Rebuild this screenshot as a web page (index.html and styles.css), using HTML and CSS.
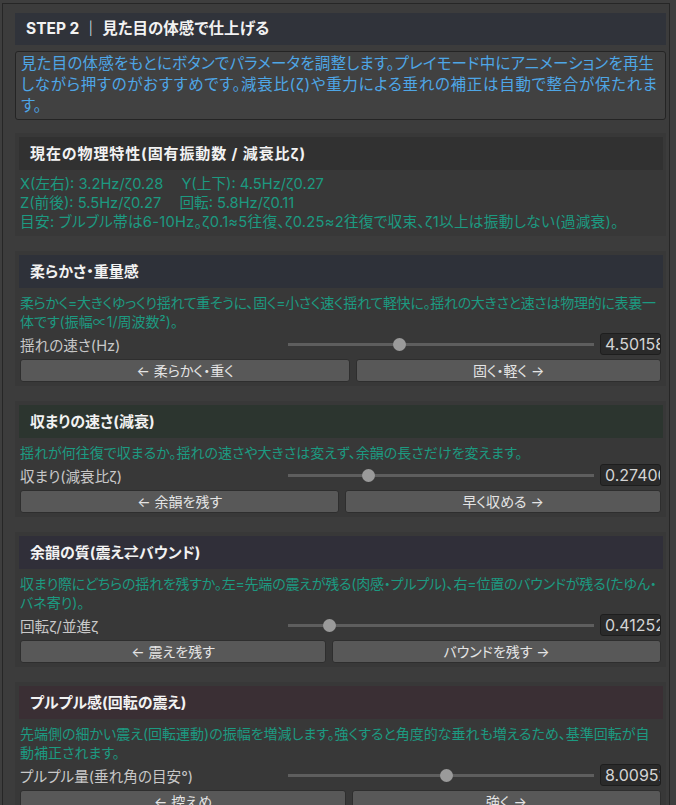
FILE: index.html
```html
<!DOCTYPE html>
<html lang="ja">
<head>
<meta charset="utf-8">
<title>STEP 2</title>
<link rel="stylesheet" href="styles.css">
</head>
<body>
<div class="panel">
  <div class="step-head">STEP 2 ｜ 見た目の体感で仕上げる</div>
  <div class="help">
    <div class="ln first">見た目の体感をもとにボタンでパラメータを調整します。プレイモード中にアニメーションを再生</div>
    <div class="ln wide">しながら押すのがおすすめです。減衰比(ζ)や重力による垂れの補正は自動で整合が保たれま</div>
    <div class="ln">す。</div>
  </div>

  <section class="sec">
    <div class="sec-head tone-neutral spread">現在の物理特性(固有振動数 / 減衰比ζ)</div>
    <div class="desc stats">
      <div class="ln">X(左右): 3.2Hz/ζ0.28<span class="col2">Y(上下): 4.5Hz/ζ0.27</span></div>
      <div class="ln">Z(前後): 5.5Hz/ζ0.27<span class="col2">回転: 5.8Hz/ζ0.11</span></div>
      <div class="ln wide">目安: ブルブル帯は6-10Hz。ζ0.1≈5往復、ζ0.25≈2往復で収束、ζ1以上は振動しない(過減衰)。</div>
    </div>
  </section>

  <section class="sec">
    <div class="sec-head tone-blue">柔らかさ・重量感</div>
    <div class="desc">
      <div class="ln tight">柔らかく=大きくゆっくり揺れて重そうに、固く=小さく速く揺れて軽快に。揺れの大きさと速さは物理的に表裏一</div>
      <div class="ln">体です(振幅∝1/周波数²)。</div>
    </div>
    <div class="row">
      <div class="label">揺れの速さ(Hz)</div>
      <div class="slider"><div class="thumb" style="left: 36.3%"></div></div>
      <div class="field">4.50158</div>
    </div>
    <div class="btns">
      <div class="btn">← 柔らかく・重く</div>
      <div class="btn">固く・軽く →</div>
    </div>
  </section>

  <section class="sec">
    <div class="sec-head tone-green">収まりの速さ(減衰)</div>
    <div class="desc">
      <div class="ln">揺れが何往復で収まるか。揺れの速さや大きさは変えず、余韻の長さだけを変えます。</div>
    </div>
    <div class="row">
      <div class="label">収まり(減衰比ζ)</div>
      <div class="slider"><div class="thumb" style="left: 26.1%"></div></div>
      <div class="field">0.27400</div>
    </div>
    <div class="btns">
      <div class="btn">← 余韻を残す</div>
      <div class="btn">早く収める →</div>
    </div>
  </section>

  <section class="sec">
    <div class="sec-head tone-purple">余韻の質(震え⇄バウンド)</div>
    <div class="desc">
      <div class="ln tight2">収まり際にどちらの揺れを残すか。左=先端の震えが残る(肉感・プルプル)、右=位置のバウンドが残る(たゆん・</div>
      <div class="ln">バネ寄り)。</div>
    </div>
    <div class="row">
      <div class="label">回転ζ/並進ζ</div>
      <div class="slider"><div class="thumb" style="left: 13.4%"></div></div>
      <div class="field">0.41252</div>
    </div>
    <div class="btns">
      <div class="btn">← 震えを残す</div>
      <div class="btn">バウンドを残す →</div>
    </div>
  </section>

  <section class="sec">
    <div class="sec-head tone-red">プルプル感(回転の震え)</div>
    <div class="desc">
      <div class="ln">先端側の細かい震え(回転運動)の振幅を増減します。強くすると角度的な垂れも増えるため、基準回転が自</div>
      <div class="ln">動補正されます。</div>
    </div>
    <div class="row">
      <div class="label">プルプル量(垂れ角の目安°)</div>
      <div class="slider"><div class="thumb" style="left: 51.6%"></div></div>
      <div class="field">8.00952</div>
    </div>
    <div class="btns">
      <div class="btn">← 控えめ</div>
      <div class="btn">強く →</div>
    </div>
  </section>
</div>
</body>
</html>
```

FILE: styles.css
```css
html, body {
  margin: 0;
  padding: 0;
  overflow: hidden;
  background: #3e3e3e;
}
body {
  font-family: Inter, "Noto Sans CJK JP", sans-serif;
  font-feature-settings: "palt" 1;
  font-size: 14px;
  color: #c8c8c8;
}
.panel {
  margin: 3px 6px 0 2px;
  border: 1px solid #262626;
  border-bottom: none;
  padding: 9px 3px 20px 12px;
  background: #3c3c3c;
}
.ln {
  white-space: nowrap;
}
.step-head {
  height: 32px;
  line-height: 32px;
  padding-left: 11px;
  background: #30333a;
  color: #f2f2f2;
  font-weight: 700;
  font-size: 15.5px;
}
.help {
  margin-top: 6px;
  border: 1px solid #242424;
  border-radius: 3px;
  background: #414141;
  padding: 1px 5px 3px 5px;
  font-size: 15.5px;
  letter-spacing: 0.2px;
  line-height: 21px;
  color: #4ea6e6;
  overflow: hidden;
}
.help .first {
  letter-spacing: 0.2px;
}
.help .wide {
  letter-spacing: 0.7px;
}
.sec {
  margin-top: 15px;
  background: #383838;
  padding: 4px 3px 4px 4px;
}
.help + .sec {
  margin-top: 13px;
}
.sec-head {
  height: 33px;
  line-height: 33px;
  padding-left: 11px;
  color: #f2f2f2;
  font-weight: 700;
  font-size: 15px;
}
.sec-head.spread {
  letter-spacing: 0.9px;
}
.tone-neutral { background: #313131; }
.tone-blue { background: #2e3139; }
.tone-green { background: #2c352f; }
.tone-purple { background: #302f39; }
.tone-red { background: #3a2f34; }
.desc {
  margin-top: 5px;
  padding-left: 1px;
  line-height: 19px;
  color: #1c9a81;
  overflow: hidden;
}
.desc.stats {
  font-size: 14.7px;
}
.desc.stats .wide {
  letter-spacing: 0.25px;
}
.desc .tight {
  letter-spacing: -0.3px;
}
.desc .tight2 {
  letter-spacing: -0.2px;
}
.col2 {
  margin-left: 18px;
}
.row {
  display: flex;
  align-items: center;
  margin: 2px 2px 0 1px;
  height: 22px;
}
.label {
  flex: 0 0 268px;
  font-size: 14.6px;
  white-space: nowrap;
  overflow: hidden;
}
.slider {
  flex: 1 1 auto;
  position: relative;
  height: 22px;
}
.slider::before {
  content: "";
  position: absolute;
  left: 0;
  right: 0;
  top: 10px;
  height: 3px;
  background: #5e5e5e;
}
.thumb {
  position: absolute;
  top: 5px;
  width: 13px;
  height: 13px;
  margin-left: -6px;
  border-radius: 50%;
  background: #9a9a9a;
}
.field {
  flex: 0 0 61px;
  box-sizing: border-box;
  height: 22px;
  margin-left: 6px;
  padding-left: 4px;
  line-height: 20px;
  border: 1px solid #1e1e1e;
  border-radius: 3px;
  background: #2a2a2a;
  color: #d4d4d4;
  font-size: 16px;
  white-space: nowrap;
  overflow: hidden;
}
.btns {
  display: flex;
  gap: 6px;
  margin: 4px 2px 0 1px;
}
.btn {
  flex: 1 1 auto;
  box-sizing: border-box;
  height: 23px;
  line-height: 21px;
  text-align: center;
  border: 1px solid #2e2e2e;
  border-radius: 3px;
  background: #585858;
  color: #e4e4e4;
  white-space: nowrap;
}
```
